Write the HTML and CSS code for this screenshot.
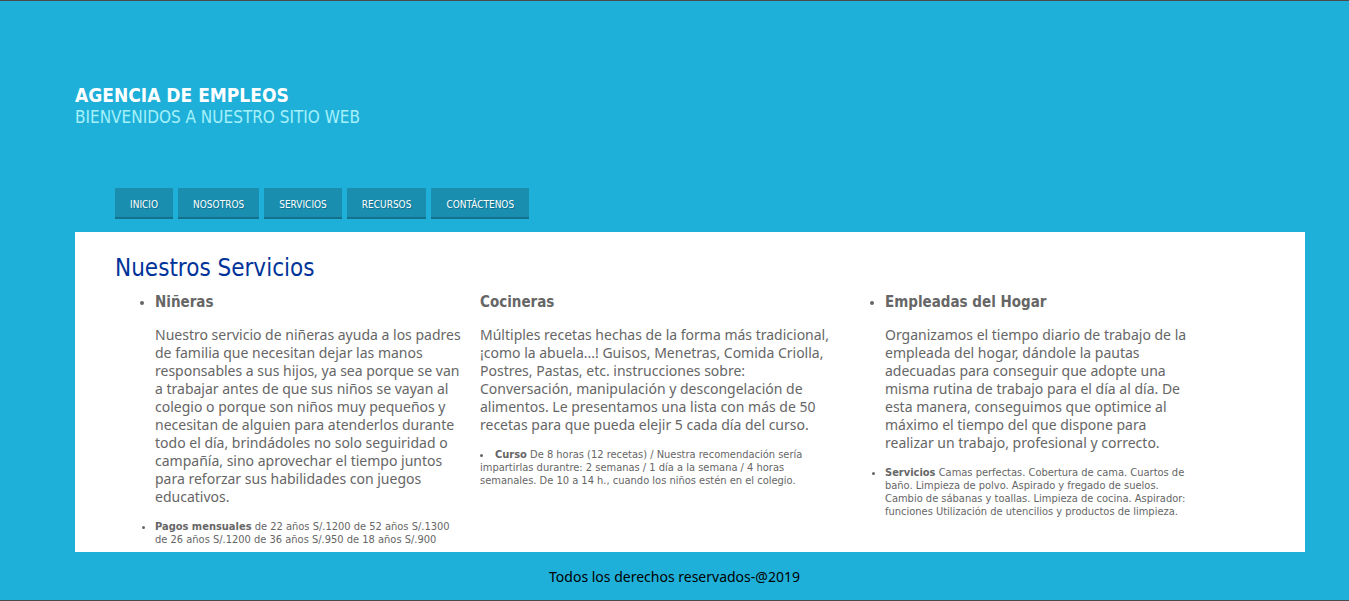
FILE: index.html
```html
<!DOCTYPE html>
<html lang="es">
<head>
<meta charset="utf-8">
<meta name="viewport" content="width=device-width, initial-scale=1">
<title>Agencia de Empleos</title>
<link rel="stylesheet" href="styles.css">
</head>
<body>
<header class="header">
  <h1 class="title">AGENCIA DE EMPLEOS</h1>
  <p class="tagline">BIENVENIDOS A NUESTRO SITIO WEB</p>
</header>
<nav class="nav">
  <a class="nav-link" href="#">INICIO</a>
  <a class="nav-link" href="#">NOSOTROS</a>
  <a class="nav-link" href="#">SERVICIOS</a>
  <a class="nav-link" href="#">RECURSOS</a>
  <a class="nav-link" href="#">CONTÁCTENOS</a>
</nav>
<main class="content">
  <h2 class="heading">Nuestros Servicios</h2>
  <div class="services">
    <ul class="service">
      <li>
        <h3 class="name">Niñeras</h3>
        <p class="text">Nuestro servicio de niñeras ayuda a los padres<br>de familia que necesitan dejar las manos<br>responsables a sus hijos, ya sea porque se van<br>a trabajar antes de que sus niños se vayan al<br>colegio o porque son niños muy pequeños y<br>necesitan de alguien para atenderlos durante<br>todo el día, brindádoles no solo seguiridad o<br>campañía, sino aprovechar el tiempo juntos<br>para reforzar sus habilidades con juegos<br>educativos.</p>
      </li>
      <li class="detail"><strong>Pagos mensuales</strong> de 22 años S/.1200 de 52 años S/.1300<br>de 26 años S/.1200 de 36 años S/.950 de 18 años S/.900</li>
    </ul>
    <ul class="service service-flush">
      <li class="unmarked">
        <h3 class="name">Cocineras</h3>
        <p class="text">Múltiples recetas hechas de la forma más tradicional,<br>¡como la abuela...! Guisos, Menetras, Comida Criolla,<br>Postres, Pastas, etc. instrucciones sobre:<br>Conversación, manipulación y descongelación de<br>alimentos. Le presentamos una lista con más de 50<br>recetas para que pueda elejir 5 cada día del curso.</p>
      </li>
      <li class="detail"><strong>Curso</strong> De 8 horas (12 recetas) / Nuestra recomendación sería<br>impartirlas durantre: 2 semanas / 1 día a la semana / 4 horas<br>semanales. De 10 a 14 h., cuando los niños estén en el colegio.</li>
    </ul>
    <ul class="service">
      <li>
        <h3 class="name">Empleadas del Hogar</h3>
        <p class="text">Organizamos el tiempo diario de trabajo de la<br>empleada del hogar, dándole la pautas<br>adecuadas para conseguir que adopte una<br>misma rutina de trabajo para el día al día. De<br>esta manera, conseguimos que optimice al<br>máximo el tiempo del que dispone para<br>realizar un trabajo, profesional y correcto.</p>
      </li>
      <li class="detail"><strong>Servicios</strong> Camas perfectas. Cobertura de cama. Cuartos de<br>baño. Limpieza de polvo. Aspirado y fregado de suelos.<br>Cambio de sábanas y toallas. Limpieza de cocina. Aspirador:<br>funciones Utilización de utencilios y productos de limpieza.</li>
    </ul>
  </div>
</main>
<footer class="footer">Todos los derechos reservados-@2019</footer>
</body>
</html>
```
FILE: styles.css
```css
* { box-sizing: border-box; }
body {
  margin: 0;
  min-height: 100vh;
  background: #1fb0d9;
  border-top: 1px solid #4a4a4f;
  border-bottom: 1px solid #4a4a4f;
  font-family: Tahoma, "DejaVu Sans Condensed", "Noto Sans", sans-serif;
  font-size: 14px;
  line-height: 18px;
  color: #666;
}
h1, h2, h3, p, ul { margin: 0; padding: 0; font-weight: normal; }
.header { padding: 82px 44px 0 75px; }
.title { font-size: 19px; line-height: 24px; font-weight: bold; color: #fff; }
.tagline { font-size: 17px; line-height: 20px; color: #a5f0fb; }
.nav { display: flex; gap: 5px; padding: 61px 44px 13px 115px; }
.nav-link {
  padding: 9px 15px 5px;
  background: #198eaf;
  border-bottom: 2px solid #14718c;
  color: #fff;
  font-size: 10px;
  line-height: 15px;
  text-decoration: none;
  text-shadow: 1px 1px 0 #14718c;
}
.content { margin: 0 44px 0 75px; padding: 20px 40px 6px; background: #fff; }
.heading { font-size: 24px; line-height: 32px; color: #003399; }
.services {
  display: grid;
  grid-template-columns: 325px 405px 1fr;
  align-items: start;
  padding: 9px 0 0 40px;
  white-space: nowrap;
}
.name { font-size: 15px; line-height: 18px; font-weight: bold; margin-bottom: 15px; }
.text { margin-bottom: 14px; font-family: Tahoma, "Noto Sans", sans-serif; }
.detail { font-size: 11px; line-height: 13px; }
.service-flush { list-style-position: inside; }
.unmarked { list-style: none; }
.footer { padding: 16px 0 14px; text-align: center; color: #000; font-family: Tahoma, "Noto Sans", sans-serif; }
```
